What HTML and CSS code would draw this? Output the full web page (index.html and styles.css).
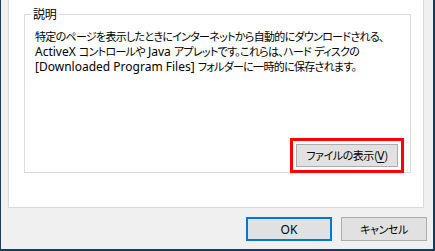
FILE: index.html
```html
<!DOCTYPE html>
<html lang="ja">
<head>
<meta charset="utf-8">
<link rel="stylesheet" href="styles.css">
</head>
<body>
<div class="window">
  <div class="panel">
    <div class="group">
      <span class="group-title">説明</span>
      <p class="desc">特定のページを表示したときにインターネットから自動的にダウンロードされる、<br><span class="en">ActiveX </span>コントロールや<span class="en"> Java </span>アプレットです。これらは、ハード<span class="en"> </span>ディスクの<br><span class="en">[Downloaded Program Files] </span>フォルダーに一時的に保存されます。</p>
      <div class="highlight">
        <button class="btn btn-view">ファイルの表示(<u class="en">V</u>)</button>
      </div>
    </div>
  </div>
  <div class="actions">
    <button class="btn btn-default"><span class="en">OK</span></button>
    <button class="btn">キャンセル</button>
  </div>
</div>
</body>
</html>
```

FILE: styles.css
```css
html, body {
  margin: 0;
  padding: 0;
  background: #f0f0f0;
}
body {
  font-family: "Noto Sans CJK JP", "Noto Sans", sans-serif;
  font-size: 11px;
  letter-spacing: -0.45px;
  font-feature-settings: "palt";
  color: #000;
}
.en {
  font-family: "Noto Sans", "Noto Sans CJK JP", sans-serif;
  font-size: 12px;
  letter-spacing: 0;
  font-feature-settings: normal;
}
.window {
  width: 435px;
  height: 251px;
  box-sizing: border-box;
  background: #f0f0f0;
  border-left: 1px solid #1c3a59;
  border-right: 2px solid #1c3a59;
  border-bottom: 2px solid #1c3a59;
  display: flex;
  flex-direction: column;
}
.panel {
  margin: 0 9px 0 7px;
  height: 208px;
  box-sizing: border-box;
  background: #fff;
  border: 1px solid #d9d9d9;
  border-top: none;
  padding: 14px 12px 34px 15px;
  display: flex;
}
.group {
  position: relative;
  flex: 1;
  min-width: 0;
  border: 1px solid #dcdcdc;
  display: flex;
  flex-direction: column;
  align-items: flex-end;
  justify-content: space-between;
  padding: 0 6px 0 10px;
}
.group-title {
  position: absolute;
  left: 6px;
  top: -9px;
  padding: 0 3px 0 2px;
  background: #fff;
  line-height: 16px;
  font-size: 12px;
  letter-spacing: -0.3px;
}
.desc {
  align-self: stretch;
  margin: 14px 0 0;
  line-height: 15px;
  white-space: nowrap;
  letter-spacing: -0.7px;
}
.desc .en {
  letter-spacing: 0;
  line-height: 15px;
}
.highlight {
  border: 3px solid #ff0000;
  padding: 3px;
  margin-bottom: -1px;
  display: flex;
}
.btn {
  font: inherit;
  letter-spacing: inherit;
  font-feature-settings: "palt";
  color: #000;
  background: #e1e1e1;
  border: 1px solid #adadad;
  border-radius: 0;
  padding: 0;
  height: 24px;
  width: 86px;
  line-height: 20px;
}
.btn-view {
  width: 102px;
  height: 23px;
}
.btn u {
  text-decoration-thickness: 1px;
  text-underline-offset: 2px;
}
.btn-default {
  border: 2px solid #0078d7;
}
.actions {
  display: flex;
  justify-content: flex-end;
  gap: 9px;
  margin-top: 9px;
  padding-right: 6px;
}
```
